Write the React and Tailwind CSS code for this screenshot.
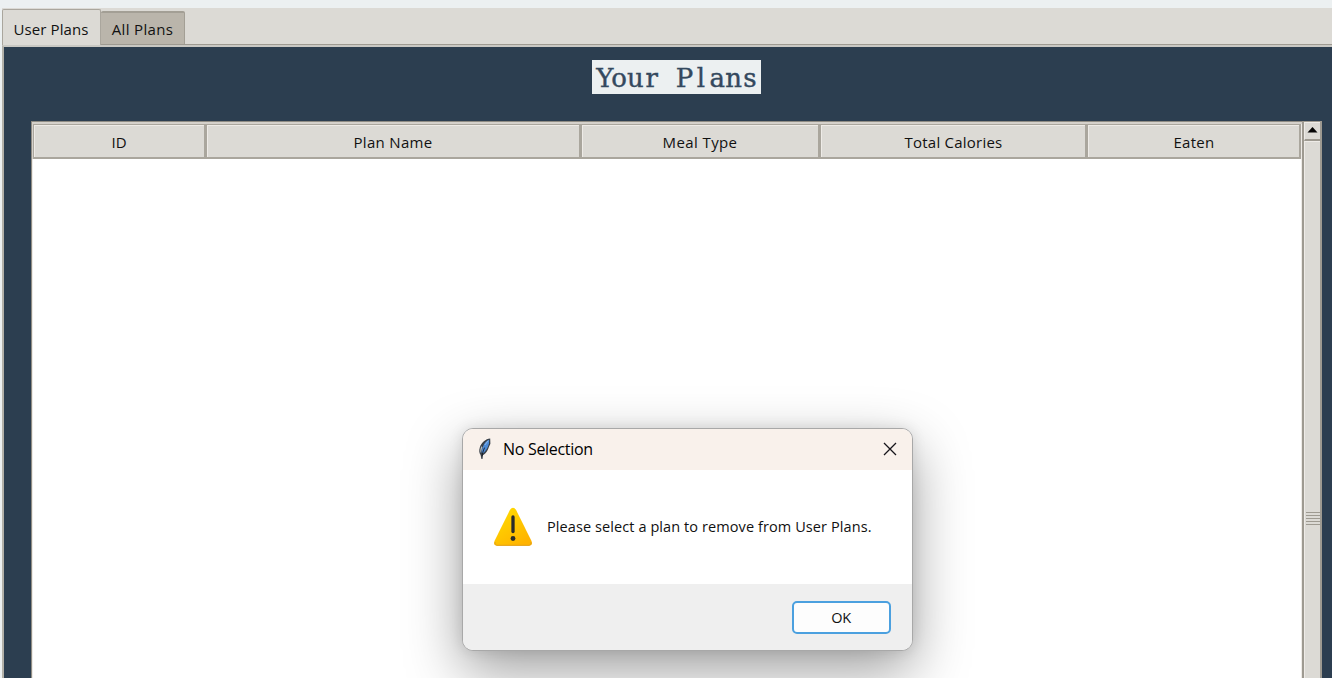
import React from "react";

const columns = [
  { label: "ID", cell: "w-[173px]", text: "pr-px" },
  { label: "Plan Name", cell: "w-[375px]", text: "pr-px tracking-[0.3px]" },
  { label: "Meal Type", cell: "w-[239px]", text: "pr-px tracking-[0.4px]" },
  { label: "Total Calories", cell: "w-[267px]", text: "tracking-[0.23px]" },
  { label: "Eaten", cell: "w-[214px]", text: "tracking-[0.3px]" },
];

function HeaderCell({ label, cell, text }) {
  return (
    <div className={`h-[35px] shrink-0 border border-r-2 border-b-2 border-[#aaa69d] ${cell}`}>
      <div className="flex h-full items-center justify-center border-t border-l border-[#eeebe7] bg-[#dcdad5] pt-px text-[15px]">
        <span className={text}>{label}</span>
      </div>
    </div>
  );
}

function Feather() {
  return (
    <svg width="16" height="22" viewBox="0 0 16 22" className="shrink-0">
      <path d="M13.2 .6 C8.6 1 4.5 4.5 2.8 9.5 C1.8 12.5 2.2 15 3.6 17 L4.4 21 L5.5 21 L6 17.2 C9.4 15 11 12.3 11.9 9 L13.4 5.8 Z" fill="#3a4149" />
      <path d="M12.2 1.8 C8.4 3 5.2 8 4.5 14.5 L6.3 15.2 C9.4 12.6 11 9.4 12 5.6Z" fill="#4c8bd8" />
      <path d="M4.3 8.2 C3.2 10.8 3 13.2 3.7 15 L5.4 9Z" fill="#b4bcc2" />
      <path d="M7.6 9.6 L6.2 13 L5 18" fill="none" stroke="#151a22" strokeWidth="0.9" />
      <path d="M11.2 2.8 L7.8 7" stroke="#91bced" strokeWidth="1" />
    </svg>
  );
}

function Warning() {
  return (
    <svg width="40" height="40" viewBox="0 0 40 40" className="shrink-0">
      <defs>
        <linearGradient id="warning-fill" x1="0" y1="0" x2="0.7" y2="1">
          <stop offset="0" stopColor="#ffe000" />
          <stop offset="1" stopColor="#ffb300" />
        </linearGradient>
      </defs>
      <path d="M16.9 2.9 Q20 -1.5 23.1 2.9 L38.5 34 Q40 38.5 36 38.7 H4 Q0 38.5 1.5 34 Z" fill="url(#warning-fill)" />
      <path d="M2 35 Q1.5 38.2 4 38.3 H36 Q38.5 38.2 38 35" fill="none" stroke="#e3a21c" strokeWidth="1" />
      <path d="M20 10 V24.5" stroke="#292b2c" strokeWidth="3.3" strokeLinecap="round" />
      <circle cx="20" cy="31.5" r="2.4" fill="#292b2c" />
    </svg>
  );
}

function Dialog() {
  return (
    <div className="absolute top-[428px] left-[462px] flex h-[223px] w-[451px] flex-col overflow-hidden rounded-[11px] border border-[#a8a8a8] bg-white shadow-[0_0_14px_rgba(0,0,0,0.1),0_20px_56px_rgba(0,0,0,0.38)]">
      <div className="flex h-[41px] shrink-0 items-center bg-[#f9f1eb] pr-[15px] pb-[2px] pl-[14px]">
        <Feather />
        <span className="ml-[10px] text-[16px] tracking-[-0.3px] text-black">No Selection</span>
        <svg width="14" height="14" viewBox="0 0 14 14" className="ml-auto">
          <path d="M1 1 L13 13 M13 1 L1 13" stroke="#17151a" strokeWidth="1.3" />
        </svg>
      </div>
      <div className="flex h-[114px] shrink-0 items-center pl-[30px]">
        <Warning />
        <span className="ml-[14px] text-[14.5px] tracking-[0.09px]">Please select a plan to remove from User Plans.</span>
      </div>
      <div className="flex flex-1 items-start justify-end bg-[#efefef] pt-[17px] pr-[21px]">
        <button className="flex h-[33px] w-[99px] items-center justify-center rounded-[5px] border-2 border-[#4ba0df] bg-[#fdfdfd] pr-px text-[14.5px] tracking-[-0.4px]">OK</button>
      </div>
    </div>
  );
}

export default function App() {
  return (
    <div className="relative flex h-[678px] w-[1332px] flex-col overflow-hidden bg-[#ecf0f1] pt-[8px] pl-[2px] font-['Open_Sans','Noto_Sans',sans-serif] whitespace-nowrap text-[#111]">
      <div className="flex h-[37px] shrink-0 bg-[#dcdad5]">
        <div className="mt-px flex h-[36px] w-[99px] items-center justify-center rounded-t-[2px] border border-b-0 border-[#aaa69d] pt-[4px] pr-px text-[15px]">
          <span className="tracking-[0.1px]">User Plans</span>
        </div>
        <div className="flex flex-1 border-b border-[#9e9a91]">
          <div className="mt-[3px] flex h-[33px] w-[84px] items-center justify-center rounded-t-[2px] border-t-2 border-r border-[#a39f95] bg-[#bab5ab] pt-[2px] text-[15px]">
            <span className="tracking-[0.35px]">All Plans</span>
          </div>
        </div>
      </div>
      <div className="flex flex-1 flex-col border-t-2 border-l-2 border-t-[#c9c8c3] border-l-[#b3b1a9] bg-[#2c3e50]">
        <div className="flex h-[74px] shrink-0 pt-[13px] pl-[588px]">
          <div className="flex h-[34px] w-[169px] items-center justify-center bg-[#ecf0f1] pt-[2px] font-['DejaVu_Serif',serif] text-[26px] text-[#34495e] [-webkit-text-stroke:0.4px_#34495e]">
            <span>
              Yo<span className="tracking-[1.9px]">u</span><span className="tracking-[6px]">r</span><span className="tracking-[3.5px]"> P</span><span className="tracking-[4.5px]">l</span>a<span className="tracking-[1.4px]">n</span>s
            </span>
          </div>
        </div>
        <div className="flex flex-1 pl-[27px]">
          <div className="flex w-[1271px] flex-col border-t border-l border-[#8f8c84] bg-white">
            <div className="flex h-[37px] border-t-2 border-l border-[#d5d1cb] bg-[#dcdad5]">
              {columns.map((column) => (
                <HeaderCell key={column.label} {...column} />
              ))}
              <div className="flex-1 bg-[#eeebe7]" />
            </div>
            <div className="flex-1 border-r border-l border-[#eeebe7]" />
          </div>
          <div className="flex w-[20px] flex-col border-t border-r-2 border-l-2 border-[#9e9a91] bg-[#dcdad5]">
            <div className="flex h-[19px] items-center justify-center border-t border-l border-b-2 border-t-[#eeebe7] border-l-[#eeebe7] border-b-[#9e9a91] pb-[2px]">
              <svg width="11" height="6" viewBox="0 0 11 6">
                <path d="M5.5 0 L10.5 5.5 H.5 Z" fill="#050505" />
              </svg>
            </div>
            <div className="flex flex-1 flex-col items-center border-t border-l border-[#eeebe7] pt-[370px]">
              <div className="flex flex-col gap-[2px]">
                <div className="h-px w-[14px] bg-[#9e9a91]" />
                <div className="h-px w-[14px] bg-[#9e9a91]" />
                <div className="h-px w-[14px] bg-[#9e9a91]" />
                <div className="h-px w-[14px] bg-[#9e9a91]" />
                <div className="h-px w-[14px] bg-[#9e9a91]" />
              </div>
            </div>
          </div>
        </div>
      </div>
      <Dialog />
    </div>
  );
}
